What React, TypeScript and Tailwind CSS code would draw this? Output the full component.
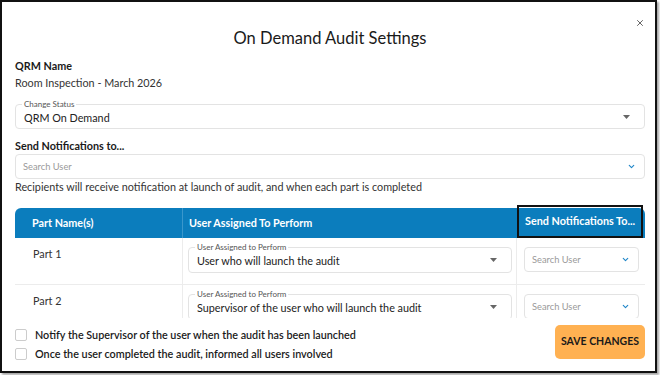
import { ChevronDown, X } from "lucide-react";

const font = { fontFamily: "Lato, 'Noto Sans', sans-serif" };

function Caret() {
  return (
    <svg width="7" height="4" viewBox="0 0 7 4" aria-hidden="true">
      <path d="M0 0h7L3.5 4z" fill="#666" />
    </svg>
  );
}

function OutlinedSelect({ label, value, className }: { label: string; value: string; className: string }) {
  return (
    <div className={`relative flex items-center justify-between rounded-[4px] border border-[#e3e3e3] pl-[8px] pr-[14px] ${className}`}>
      <span className="absolute -top-[6px] left-[6px] bg-white px-[2px] text-[8px] leading-[10px] text-[#555]">{label}</span>
      <span className="mt-[3px] text-[10.8px] text-[#222]">{value}</span>
      <Caret />
    </div>
  );
}

function SearchSelect({ className }: { className: string }) {
  return (
    <div className={`flex items-center justify-between rounded-[4px] border border-[#e3e3e3] pl-[7px] pr-[8px] ${className}`}>
      <span className="text-[9.3px] text-[#9a9a9a]">Search User</span>
      <ChevronDown size={9} strokeWidth={3} className="text-[#1f86c8]" />
    </div>
  );
}

const rows = [
  { part: "Part 1", user: "User who will launch the audit" },
  { part: "Part 2", user: "Supervisor of the user who will launch the audit" },
];

export default function App() {
  return (
    <div className="h-[375px] w-[660px] bg-white" style={font}>
      <div className="relative flex h-[373px] w-[657px] flex-col border-2 border-[#111] bg-white pl-[13px] pr-[10px] text-[10.8px] shadow-[2px_2px_2px_rgba(0,0,0,0.35)]">
        <button className="absolute right-[10px] top-[16px] text-[#444]">
          <X size={10} strokeWidth={2} />
        </button>

        <h1 className="mt-[25px] text-center text-[16.5px] leading-[22px] text-[#1a1a1a]">On Demand Audit Settings</h1>

        <div className="mt-[10px] font-bold leading-[14px] text-[#1a1a1a]">QRM Name</div>
        <div className="mt-[3px] leading-[14px] text-[#333]">Room Inspection - March 2026</div>

        <OutlinedSelect label="Change Status" value="QRM On Demand" className="mt-[14px] h-[25px]" />

        <div className="mt-[10px] font-bold leading-[14px] text-[#1a1a1a]">Send Notifications to...</div>
        <SearchSelect className="mt-[1px] h-[25px]" />
        <div className="mt-[1px] leading-[14px] text-[#333]">
          Recipients will receive notification at launch of audit, and when each part is completed
        </div>

        <div className="mt-[11px] h-[113px] overflow-hidden pt-[3px]">
          <div className="grid h-[30px] grid-cols-[168px_334px_128px] rounded-t-[6px] bg-[#0b7dbd] font-bold text-white">
            <div className="flex items-center border-r border-[#3a97cc] pl-[17px]">Part Name(s)</div>
            <div className="flex items-center pl-[6px]">User Assigned To Perform</div>
            <div className="-mt-[3px] mr-[2px] flex items-center whitespace-nowrap border-2 border-[#111] pl-[6px]">Send Notifications To...</div>
          </div>
          {rows.map((r) => (
            <div key={r.part} className="grid h-[47px] grid-cols-[168px_334px_128px] border-b border-[#ececec]">
              <div className="border-r border-[#ececec] pl-[18px] pt-[8px] text-[#333]">{r.part}</div>
              <div className="border-r border-[#ececec] pl-[5px] pr-[4px] pt-[9px]">
                <OutlinedSelect label="User Assigned to Perform" value={r.user} className="h-[26px]" />
              </div>
              <div className="pl-[7px] pr-[6px] pt-[9px]">
                <SearchSelect className="h-[25px]" />
              </div>
            </div>
          ))}
        </div>

        <div className="mt-[4px] flex items-start justify-between">
          <div className="mt-[5px] flex flex-col gap-[3px] font-semibold text-[#1a1a1a]">
            <label className="flex items-center gap-[8px]">
              <span className="h-[12px] w-[12px] rounded-[2px] border border-[#ccc]" />
              Notify the Supervisor of the user when the audit has been launched
            </label>
            <label className="flex items-center gap-[8px]">
              <span className="h-[12px] w-[12px] rounded-[2px] border border-[#ccc]" />
              Once the user completed the audit, informed all users involved
            </label>
          </div>
          <button className="mt-[3px] flex h-[34px] w-[90px] items-center justify-center rounded-[5px] bg-[#ffb152] text-[10.5px] font-bold text-[#1a1a1a]">
            SAVE CHANGES
          </button>
        </div>
      </div>
    </div>
  );
}
